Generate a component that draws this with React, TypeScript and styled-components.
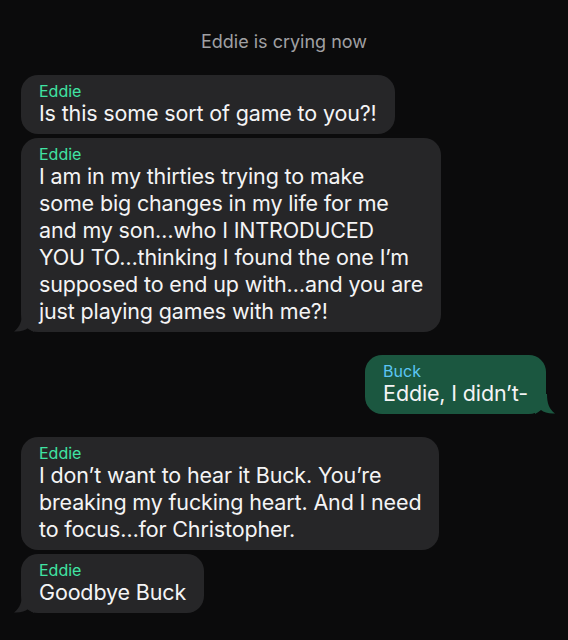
import React from "react";
import styled, { createGlobalStyle } from "styled-components";

const GlobalStyle = createGlobalStyle`
  html, body {
    margin: 0;
    padding: 0;
    background: #0b0b0c;
  }
  body {
    font-family: Inter, "Noto Sans", "Liberation Sans", sans-serif;
    -webkit-font-smoothing: antialiased;
  }
`;

const Screen = styled.div`
  width: 568px;
  height: 640px;
  overflow: hidden;
  background: #0b0b0c;
  display: flex;
  flex-direction: column;
  padding: 30px 21px 0;
  box-sizing: border-box;
`;

const Status = styled.div`
  text-align: center;
  color: #a0a0a3;
  font-size: 18px;
  line-height: 24px;
  margin-bottom: 21px;
`;

const Group = styled.div<{ $mine?: boolean }>`
  display: flex;
  flex-direction: column;
  align-items: ${(p) => (p.$mine ? "flex-end" : "flex-start")};
  gap: 4px;
  margin-bottom: 23px;
  padding-right: ${(p) => (p.$mine ? "1px" : "0")};
`;

const Bubble = styled.div<{ $mine?: boolean }>`
  position: relative;
  background: ${(p) => (p.$mine ? "#1b5740" : "#262628")};
  border-radius: 17px;
  padding: 7px 18px 7px;
  color: #f4f4f5;
`;

const Name = styled.div<{ $mine?: boolean }>`
  font-size: 16px;
  line-height: 18px;
  color: ${(p) => (p.$mine ? "#5cc6f5" : "#40e3a3")};
`;

const Text = styled.div`
  font-size: 21.5px;
  line-height: 27px;
  letter-spacing: -0.15px;
  white-space: nowrap;
`;

const TailSvg = styled.svg<{ $mine?: boolean }>`
  position: absolute;
  bottom: 0;
  width: 20px;
  height: 20px;
  ${(p) =>
    p.$mine
      ? "right: -9px; transform: scaleX(-1);"
      : "left: -7px;"}
`;

const Tail = ({ mine }: { mine?: boolean }) => (
  <TailSvg $mine={mine} viewBox="0 0 20 20">
    <path
      d="M8 0 C8 9 6 15 0 19.5 C6 20 11 18.5 14 16 C16 17.5 18 19 20 20 L20 0 Z"
      fill={mine ? "#1b5740" : "#262628"}
    />
  </TailSvg>
);

interface Msg {
  lines: string[];
  tail?: boolean;
}

const Message = ({ name, msg, mine }: { name: string; msg: Msg; mine?: boolean }) => (
  <Bubble $mine={mine}>
    <Name $mine={mine}>{name}</Name>
    <Text>
      {msg.lines.map((l, i) => (
        <React.Fragment key={i}>
          {l}
          {i < msg.lines.length - 1 && <br />}
        </React.Fragment>
      ))}
    </Text>
    {msg.tail && <Tail mine={mine} />}
  </Bubble>
);

export default function App() {
  return (
    <>
      <GlobalStyle />
      <Screen>
        <Status>Eddie is crying now</Status>
        <Group>
          <Message name="Eddie" msg={{ lines: ["Is this some sort of game to you?!"] }} />
          <Message
            name="Eddie"
            msg={{
              tail: true,
              lines: [
                "I am in my thirties trying to make",
                "some big changes in my life for me",
                "and my son…who I INTRODUCED",
                "YOU TO…thinking I found the one I’m",
                "supposed to end up with…and you are",
                "just playing games with me?!",
              ],
            }}
          />
        </Group>
        <Group $mine>
          <Message mine name="Buck" msg={{ tail: true, lines: ["Eddie, I didn’t-"] }} />
        </Group>
        <Group>
          <Message
            name="Eddie"
            msg={{
              lines: [
                "I don’t want to hear it Buck. You’re",
                "breaking my fucking heart. And I need",
                "to focus…for Christopher.",
              ],
            }}
          />
          <Message name="Eddie" msg={{ tail: true, lines: ["Goodbye Buck"] }} />
        </Group>
      </Screen>
    </>
  );
}
